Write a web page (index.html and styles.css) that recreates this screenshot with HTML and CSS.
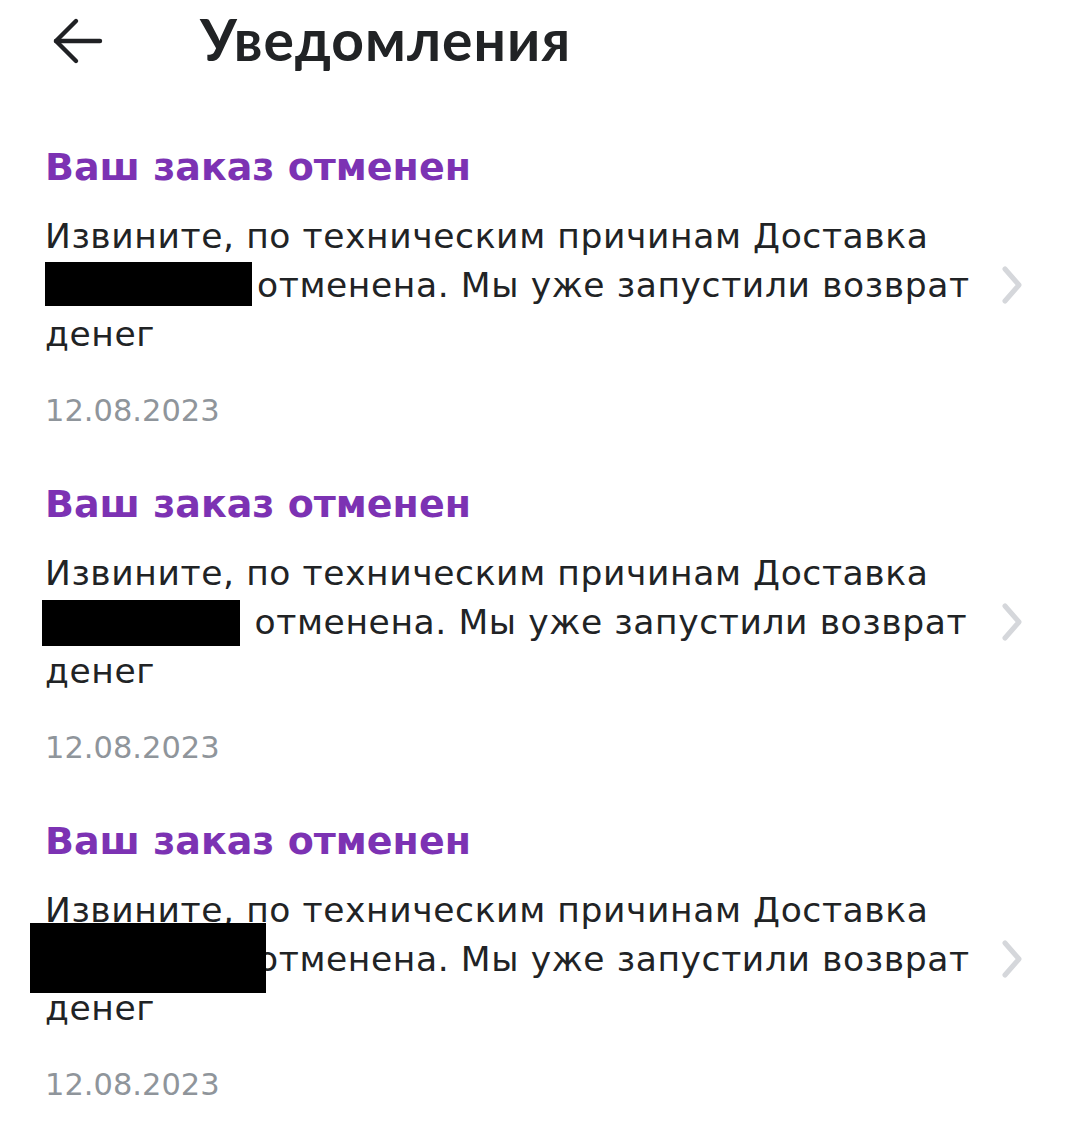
FILE: index.html
```html
<!DOCTYPE html>
<html lang="ru">
<head>
<meta charset="utf-8">
<title>Уведомления</title>
<link rel="stylesheet" href="styles.css">
</head>
<body>
<header class="topbar">
  <button class="back" aria-label="Назад">
    <svg width="56" height="52" viewBox="0 0 56 52" fill="none" stroke="#202124" stroke-width="4.4" stroke-linecap="round" stroke-linejoin="round">
      <path d="M6 24 H50"/>
      <path d="M26 4 L6 24 L26 44"/>
    </svg>
  </button>
  <h1 class="page-title">Уведомления</h1>
</header>
<main class="list">
  <article class="item">
    <h2 class="item-title">Ваш заказ отменен</h2>
    <div class="item-row">
      <p class="item-text">Извините, по техническим причинам Доставка<br><span class="gap gap-a"></span>отменена. Мы уже запустили возврат<br>денег<span class="mask mask-1"></span></p>
      <svg class="chev" width="24" height="38" viewBox="0 0 24 38" fill="none" stroke="#d5d7db" stroke-width="5" stroke-linecap="round" stroke-linejoin="round"><path d="M4 3 L18 19 L4 35"/></svg>
    </div>
    <div class="item-date">12.08.2023</div>
  </article>
  <article class="item">
    <h2 class="item-title">Ваш заказ отменен</h2>
    <div class="item-row">
      <p class="item-text">Извините, по техническим причинам Доставка<br><span class="gap gap-b"></span> отменена. Мы уже запустили возврат<br>денег<span class="mask mask-2"></span></p>
      <svg class="chev" width="24" height="38" viewBox="0 0 24 38" fill="none" stroke="#d5d7db" stroke-width="5" stroke-linecap="round" stroke-linejoin="round"><path d="M4 3 L18 19 L4 35"/></svg>
    </div>
    <div class="item-date">12.08.2023</div>
  </article>
  <article class="item">
    <h2 class="item-title">Ваш заказ отменен</h2>
    <div class="item-row">
      <p class="item-text">Извините, по техническим причинам Доставка<br><span class="gap gap-a"></span>отменена. Мы уже запустили возврат<br>денег<span class="mask mask-3"></span></p>
      <svg class="chev" width="24" height="38" viewBox="0 0 24 38" fill="none" stroke="#d5d7db" stroke-width="5" stroke-linecap="round" stroke-linejoin="round"><path d="M4 3 L18 19 L4 35"/></svg>
    </div>
    <div class="item-date">12.08.2023</div>
  </article>
</main>
</body>
</html>
```

FILE: styles.css
```css
* { box-sizing: border-box; }

html, body {
  margin: 0;
  padding: 0;
  background: #ffffff;
}

body {
  font-family: "DejaVu Sans", "Noto Sans", sans-serif;
  color: #212325;
}

.topbar {
  height: 84px;
  display: flex;
  align-items: center;
  padding-left: 50px;
}

.back {
  border: 0;
  background: none;
  padding: 0;
  width: 56px;
  height: 52px;
  display: flex;
  margin-top: 1px;
}

.page-title {
  margin: -6px 0 0 94px;
  font-family: "Lato", "DejaVu Sans", sans-serif;
  font-weight: 700;
  font-size: 57px;
  letter-spacing: 1px;
  color: #212325;
  line-height: 1;
}

.list {
  padding: 58px 0 0 45px;
}

.item {
  padding-bottom: 48px;
}

.item-title {
  margin: 0;
  font-size: 38px;
  line-height: 50px;
  font-weight: 700;
  color: #7c32b3;
}

.item-row {
  margin-top: 19.5px;
  display: flex;
  align-items: center;
  justify-content: space-between;
  padding-right: 51px;
}

.item-text {
  position: relative;
  margin: 0;
  font-size: 34.5px;
  line-height: 49px;
  letter-spacing: 0.6px;
  color: #212325;
}

.gap {
  display: inline-block;
  height: 1px;
}

.gap-a { width: 212px; }
.gap-b { width: 198px; }

.mask {
  position: absolute;
  background: #000;
}

.mask-1 { left: 0; top: 50px; width: 207px; height: 44px; }
.mask-2 { left: -3px; top: 51px; width: 198px; height: 46px; }
.mask-3 { left: -15px; top: 37px; width: 236px; height: 70px; }

.chev {
  flex: none;
}

.item-date {
  margin-top: 32.5px;
  font-size: 30.5px;
  line-height: 40px;
  color: #8f959b;
}
```
